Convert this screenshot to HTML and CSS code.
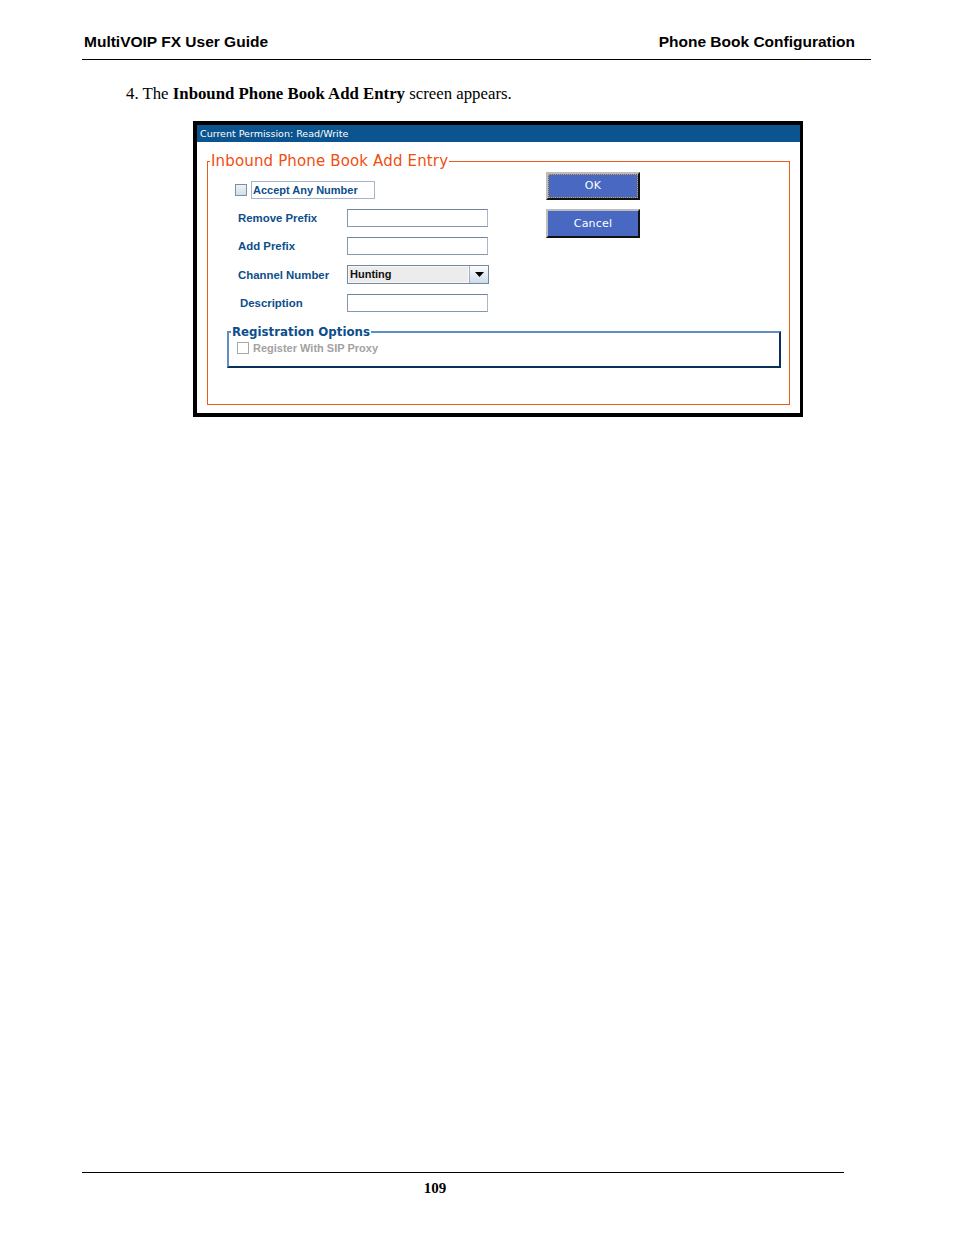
FILE: index.html
```html
<!DOCTYPE html>
<html>
<head>
<meta charset="utf-8">
<title>Phone Book Configuration</title>
<link rel="stylesheet" href="styles.css">
</head>
<body>
<div class="page">
  <header class="hdr"><span>MultiVOIP FX User Guide</span><span>Phone Book Configuration</span></header>
  <p class="step">4. The <b>Inbound Phone Book Add Entry</b> screen appears.</p>
  <div class="shot">
    <div class="titlebar">Current Permission: Read/Write</div>
    <div class="canvas">
      <fieldset class="entry">
        <legend>Inbound Phone Book Add Entry</legend>
        <div class="top">
          <div class="form">
            <div class="accept"><span class="cb"></span><span class="accept-label">Accept Any Number</span></div>
            <span class="lbl">Remove Prefix</span><span class="input"></span>
            <span class="lbl">Add Prefix</span><span class="input"></span>
            <span class="lbl">Channel Number</span>
            <span class="combo"><span class="combo-val">Hunting</span><span class="combo-btn"><svg width="9" height="5" viewBox="0 0 9 5"><path d="M0 0H9L4.5 5Z" fill="#000"/></svg></span></span>
            <span class="lbl lbl-desc">Description</span><span class="input"></span>
          </div>
          <div class="btns">
            <div class="btn btn-focus"><span class="btn-text">OK</span></div>
            <div class="btn"><span class="btn-text">Cancel</span></div>
          </div>
        </div>
        <fieldset class="reg">
          <legend>Registration Options</legend>
          <div class="reg-row"><span class="cb cb-dis"></span><span class="reg-label">Register With SIP Proxy</span></div>
        </fieldset>
      </fieldset>
    </div>
  </div>
  <footer class="ftr"><span>109</span></footer>
</div>
</body>
</html>
```

FILE: styles.css
```css
* { box-sizing: border-box; }

body {
  margin: 0;
  background: #fff;
  color: #000;
}

.page {
  height: 1235px;
  display: flex;
  flex-direction: column;
  align-items: flex-start;
  padding: 33px 0 38px 0;
}

.hdr {
  margin-left: 82px;
  width: 789px;
  display: flex;
  justify-content: space-between;
  padding: 0 16px 8px 2px;
  border-bottom: 1px solid #000;
  font: bold 15.5px/18px "Liberation Sans", Arial, sans-serif;
}

.step {
  margin: 24px 0 0 126px;
  font: 16.8px/20px "Liberation Serif", "Times New Roman", serif;
}

.shot {
  margin: 17px 0 0 193px;
  width: 610px;
  border: 4px solid #000;
  border-right-width: 3px;
  background: #fff;
}

.titlebar {
  height: 17px;
  background: #0b548f;
  color: #fff;
  padding-left: 3px;
  font: 9.5px/17px "DejaVu Sans", sans-serif;
}

.canvas {
  padding: 10px 10px 8px 10px;
}

.entry {
  margin: 0;
  padding: 0 0 36px 0;
  border: 1px solid #ec5a1c;
  min-width: 0;
}

.entry > legend {
  margin-left: 2px;
  padding: 0 1px;
  color: #f04e12;
  font: 15px/19px "DejaVu Sans", sans-serif;
  letter-spacing: 0.15px;
}

.top {
  display: flex;
  align-items: flex-start;
}

.form {
  margin-left: 30px;
  padding-top: 10px;
  display: grid;
  grid-template-columns: 109px 142px;
  grid-template-rows: 18px 18px 18px 19px 18px;
  row-gap: 10px;
  align-items: center;
}

.accept {
  grid-column: 1 / -1;
  margin-left: -3px;
  display: flex;
  align-items: center;
  gap: 4px;
}

.cb {
  width: 12px;
  height: 12px;
  border: 1px solid #7d8ea6;
  background: linear-gradient(#eef1f6, #d6dde8);
  flex: none;
}

.cb-dis {
  border-color: #a8a8a8;
  background: #fff;
}

.accept-label {
  width: 124px;
  height: 18px;
  border: 1px solid #a4b6cc;
  padding-left: 1px;
  color: #0d4e8a;
  font: bold 11px/16px "Liberation Sans", Arial, sans-serif;
}

.lbl {
  color: #0d4e8a;
  font: bold 11.4px/14px "Liberation Sans", Arial, sans-serif;
}

.lbl-desc {
  padding-left: 2px;
}

.input {
  width: 141px;
  height: 18px;
  background: #fff;
  border: 1px solid #8797ad;
  border-top-color: #7384a0;
  border-right-color: #a9b7c8;
}

.combo {
  width: 142px;
  height: 19px;
  display: flex;
  border: 1px solid #74889f;
}

.combo-val {
  flex: 1;
  background: #ececec;
  border: 1px solid #f8f8f8;
  padding-left: 1px;
  font: bold 11px/15px "Liberation Sans", Arial, sans-serif;
  color: #111;
}

.combo-btn {
  width: 19px;
  display: flex;
  align-items: center;
  justify-content: center;
  border-left: 1px solid #9fb0c4;
  background: linear-gradient(#fbfcfe, #cfdbe9);
}

.btns {
  margin: 1px 0 0 57px;
  display: flex;
  flex-direction: column;
  gap: 9px;
}

.btn {
  width: 94px;
  height: 28px;
  display: flex;
  align-items: center;
  justify-content: center;
  background: #4868c2;
  border: 2px solid;
  border-color: #bdbdbd #111 #111 #bdbdbd;
  color: #fff;
  font: 11px/14px "DejaVu Sans", sans-serif;
}

.btn + .btn {
  height: 29px;
}

.btn-focus {
  outline: 1px dotted #d0a040;
  outline-offset: -3px;
}

.btn-text {
  letter-spacing: 0.2px;
}

.reg {
  margin: 12px 8px 0 19px;
  padding: 2px 0 12px 0;
  border: 2px solid;
  border-color: #5f8fc0 #0b2f5c #0b2f5c #5f8fc0;
  min-width: 0;
}

.reg > legend {
  margin-left: 2px;
  padding: 0 1px;
  color: #0d4e8a;
  font: bold 11.8px/16px "DejaVu Sans", sans-serif;
}

.reg-row {
  height: 12px;
  padding-left: 8px;
  display: flex;
  align-items: center;
  gap: 4px;
}

.reg-label {
  color: #a2a2a2;
  font: bold 11px/12px "Liberation Sans", Arial, sans-serif;
}

.ftr {
  margin: auto 0 0 82px;
  width: 762px;
  border-top: 1px solid #000;
  padding: 6px 56px 0 0;
  text-align: center;
  font: bold 15px/18px "Liberation Serif", "Times New Roman", serif;
}
```
